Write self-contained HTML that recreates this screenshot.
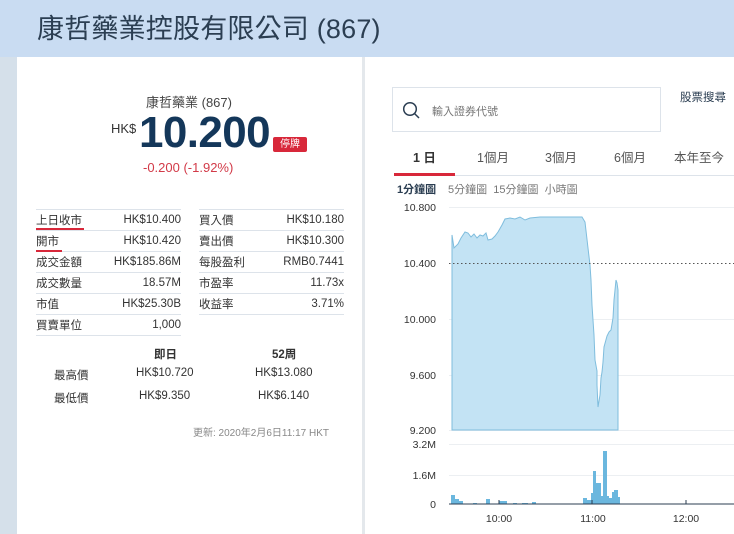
<!DOCTYPE html>
<html><head><meta charset="utf-8"><style>
*{margin:0;padding:0;box-sizing:border-box}
body{width:734px;height:534px;overflow:hidden;background:#d5e0ea;font-family:"Liberation Sans","Noto Sans CJK TC",sans-serif;position:relative;color:#333}
.hdr{position:absolute;left:0;top:0;width:734px;height:57px;background:#c9dcf2}
.hdr h1{position:absolute;left:37px;top:7px;font-size:27px;font-weight:normal;color:#2b3e52;letter-spacing:0.2px}
.lp{position:absolute;left:17px;top:57px;width:345px;height:477px;background:#fff}
.sep{position:absolute;left:362px;top:57px;width:3px;height:477px;background:#e4e8ec}
.rp{position:absolute;left:365px;top:57px;width:369px;height:477px;background:#fff}
.a{position:absolute;white-space:nowrap}
table.s{position:absolute;border-collapse:collapse;font-size:11.5px;color:#333}
table.s td{height:21px;border-top:1px solid #dde3ea;padding:0}
table.s td.r{text-align:right}
</style></head><body>
<div class="hdr"><h1>康哲藥業控股有限公司 (867)</h1></div>
<div class="lp"></div><div class="sep"></div><div class="rp"></div>

<div class="a" style="left:146px;top:92px;font-size:13px;color:#444">康哲藥業 (867)</div>
<div class="a" style="left:111px;top:121px;font-size:13px;color:#333">HK$</div>
<div class="a" style="left:139px;top:108px;font-size:44px;color:#14375a;letter-spacing:-0.6px;font-weight:bold">10.200</div>
<div class="a" style="left:273px;top:137px;width:34px;height:15px;background:#d8283a;color:#fff;font-size:10px;text-align:center;line-height:15px;border-radius:2px">停牌</div>
<div class="a" style="left:143px;top:160px;font-size:13px;color:#d23a48">-0.200 (-1.92%)</div>

<table class="s" style="left:36px;top:209px;width:145px">
<tr><td>上日收市</td><td class="r">HK$10.400</td></tr>
<tr><td>開市</td><td class="r">HK$10.420</td></tr>
<tr><td>成交金額</td><td class="r">HK$185.86M</td></tr>
<tr><td>成交數量</td><td class="r">18.57M</td></tr>
<tr><td>市值</td><td class="r">HK$25.30B</td></tr>
<tr><td style="border-bottom:1px solid #dde3ea">買賣單位</td><td class="r" style="border-bottom:1px solid #dde3ea">1,000</td></tr>
</table>
<div class="a" style="left:36px;top:228px;width:48px;height:2px;background:#d8283a"></div>
<div class="a" style="left:36px;top:250px;width:26px;height:2px;background:#d8283a"></div>
<table class="s" style="left:199px;top:209px;width:145px">
<tr><td>買入價</td><td class="r">HK$10.180</td></tr>
<tr><td>賣出價</td><td class="r">HK$10.300</td></tr>
<tr><td>每股盈利</td><td class="r">RMB0.7441</td></tr>
<tr><td>市盈率</td><td class="r">11.73x</td></tr>
<tr><td style="border-bottom:1px solid #dde3ea">收益率</td><td class="r" style="border-bottom:1px solid #dde3ea">3.71%</td></tr>
</table>

<div class="a" style="left:154px;top:346px;font-size:11.5px;font-weight:bold;color:#333">即日</div>
<div class="a" style="left:272px;top:346px;font-size:11.5px;font-weight:bold;color:#333">52周</div>
<div class="a" style="left:54px;top:367px;font-size:11.5px">最高價</div>
<div class="a" style="left:136px;top:367px;font-size:11.5px">HK$10.720</div>
<div class="a" style="left:255px;top:367px;font-size:11.5px">HK$13.080</div>
<div class="a" style="left:54px;top:390px;font-size:11.5px">最低價</div>
<div class="a" style="left:139px;top:390px;font-size:11.5px">HK$9.350</div>
<div class="a" style="left:258px;top:390px;font-size:11.5px">HK$6.140</div>
<div class="a" style="left:193px;top:424px;font-size:10px;color:#888">更新: 2020年2月6日11:17 HKT</div>

<div class="a" style="left:392px;top:87px;width:269px;height:45px;border:1px solid #dde3ea"></div>
<svg class="a" style="left:402px;top:101px" width="20" height="20" viewBox="0 0 20 20"><circle cx="8" cy="8" r="6.3" fill="none" stroke="#2b3e52" stroke-width="1.5"/><line x1="12.6" y1="12.6" x2="17" y2="17" stroke="#2b3e52" stroke-width="1.5"/></svg>
<div class="a" style="left:432px;top:103px;font-size:11px;color:#777">輸入證券代號</div>
<div class="a" style="left:680px;top:89px;font-size:11.5px;color:#2b3e52">股票搜尋</div>

<div class="a" style="left:413px;top:147px;font-size:12.5px;color:#333;font-weight:bold">1 日</div>
<div class="a" style="left:477px;top:147px;font-size:12.5px;color:#555">1個月</div>
<div class="a" style="left:545px;top:147px;font-size:12.5px;color:#555">3個月</div>
<div class="a" style="left:614px;top:147px;font-size:12.5px;color:#555">6個月</div>
<div class="a" style="left:674px;top:147px;font-size:12.5px;color:#555">本年至今</div>
<div class="a" style="left:394px;top:175px;width:340px;height:1px;background:#dde3ea"></div>
<div class="a" style="left:394px;top:173px;width:61px;height:3px;background:#d8283a"></div>
<div class="a" style="left:397px;top:181px;font-size:11px;color:#2b3e52;font-weight:bold">1分鐘圖</div>
<div class="a" style="left:448px;top:181px;font-size:11px;color:#777">5分鐘圖 &nbsp;15分鐘圖 &nbsp;小時圖</div>

<svg class="a" style="left:367px;top:195px" width="367" height="339" viewBox="367 195 367 339" font-family="Liberation Sans" font-size="10.5" fill="#333">
<g stroke="#eceff2" stroke-width="1"><line x1="449" y1="207.5" x2="734" y2="207.5"/><line x1="449" y1="319.5" x2="734" y2="319.5"/><line x1="449" y1="375.5" x2="734" y2="375.5"/><line x1="449" y1="430.5" x2="734" y2="430.5"/><line x1="449" y1="444.5" x2="734" y2="444.5"/><line x1="449" y1="475.5" x2="734" y2="475.5"/></g>
<path d="M452,430 L452,235 L454,248 L458,244 L461,238 L465,232 L468,233 L471,237 L474,234 L477,238 L480,235 L483,236 L486,233 L488,240 L492,239 L495,236 L498,232 L502,225 L505,219 L510,218 L515,219 L520,217 L525,220 L530,218 L540,217 L560,217 L582,217 L585,222 L588,248 L590,265 L591,280 L592,305 L594,335 L595,360 L597,371 L597,385 L598,407 L600,395 L601,378 L602,372 L603,362 L604,347 L607,336 L609,332 L611,330 L613,318 L614,300 L615,290 L616,280 L617,283 L618,290 L618,430 Z" fill="#c3e3f4" stroke="#7fbddd" stroke-width="1"/>
<line x1="449" y1="263.5" x2="734" y2="263.5" stroke="#555" stroke-dasharray="1.5,2.5" stroke-width="1"/>
<g text-anchor="end"><text x="436" y="211">10.800</text><text x="436" y="267">10.400</text><text x="436" y="323">10.000</text><text x="436" y="379">9.600</text><text x="436" y="434">9.200</text><text x="436" y="448">3.2M</text><text x="436" y="479">1.6M</text><text x="436" y="508">0</text></g>
<g fill="#6bb7de">
<rect x="451" y="495" width="4" height="9"/><rect x="455" y="499" width="4" height="5"/><rect x="459" y="501" width="4" height="3"/><rect x="473" y="503" width="4" height="1"/><rect x="486" y="499" width="4" height="5"/><rect x="499" y="501" width="8" height="3"/><rect x="513" y="503" width="4" height="1"/><rect x="522" y="503" width="6" height="1"/><rect x="532" y="502" width="4" height="2"/>
<rect x="583" y="498" width="4" height="6"/><rect x="587" y="500" width="4" height="4"/><rect x="591" y="493" width="2" height="11"/><rect x="593" y="471" width="3" height="33"/><rect x="596" y="483" width="3" height="21"/><rect x="599" y="483" width="2" height="21"/><rect x="601" y="496" width="2" height="8"/><rect x="603" y="451" width="4" height="53"/><rect x="607" y="496" width="2" height="8"/><rect x="609" y="498" width="3" height="6"/><rect x="612" y="492" width="2" height="12"/><rect x="614" y="490" width="4" height="14"/><rect x="618" y="497" width="2" height="7"/>
</g>
<line x1="449" y1="504" x2="734" y2="504" stroke="#2b3e52" stroke-width="1"/>
<g stroke="#2b3e52"><line x1="499" y1="500" x2="499" y2="504"/><line x1="592" y1="500" x2="592" y2="504"/><line x1="686" y1="500" x2="686" y2="504"/></g>
<g text-anchor="middle"><text x="499" y="522">10:00</text><text x="593" y="522">11:00</text><text x="686" y="522">12:00</text></g>
</svg>
</body></html>
